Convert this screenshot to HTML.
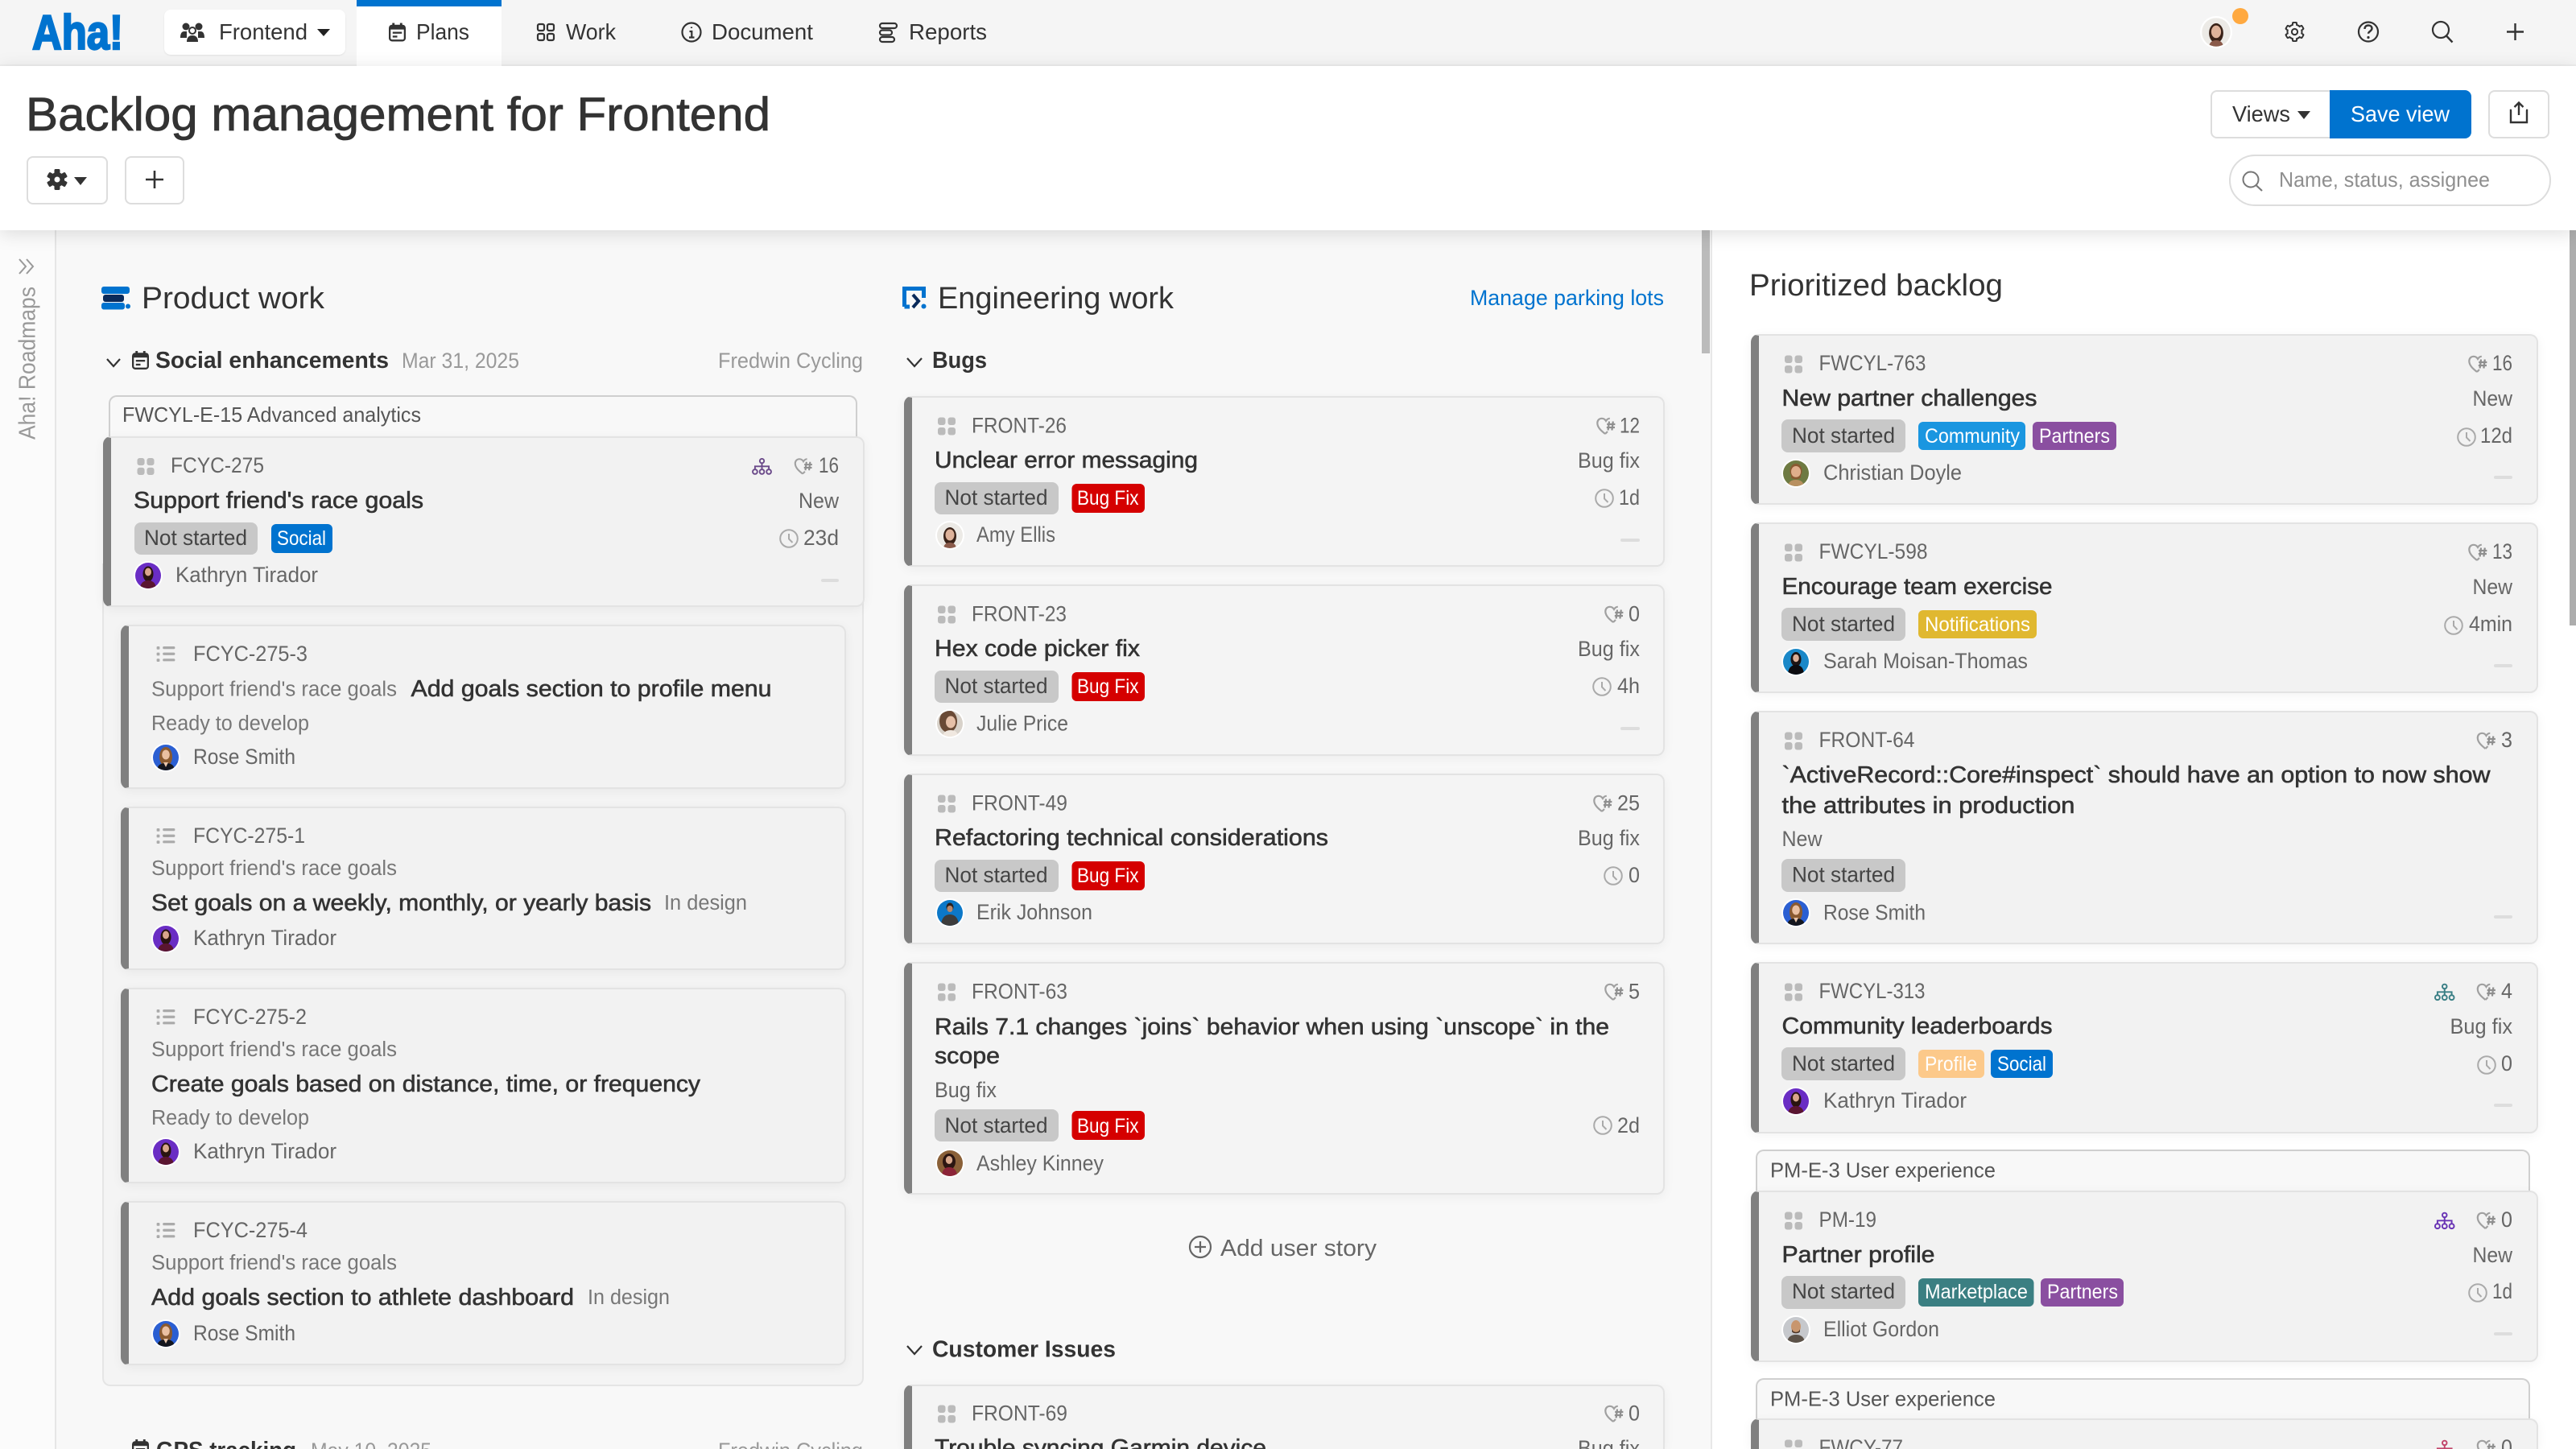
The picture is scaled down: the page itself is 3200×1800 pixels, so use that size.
<!DOCTYPE html>
<html lang="en">
<head>
<meta charset="utf-8">
<title>Backlog management for Frontend</title>
<style>
html,body{margin:0;padding:0;width:3200px;height:1800px;overflow:hidden;background:#f8f8f8;font-family:"Liberation Sans",sans-serif}
#w{position:relative;width:3200px;height:1800px;overflow:hidden;background:#f8f8f8}
.a{position:absolute;box-sizing:border-box}
.c{position:absolute;box-sizing:border-box;background:#f2f2f2;border:2px solid #e3e3e3;border-left:10px solid #808080;border-radius:10px;box-shadow:0 3px 14px rgba(0,0,0,.05)}
.o{border-bottom:0;border-radius:10px 10px 0 0}
.m{background:#f4f4f4}
.e{position:absolute;box-sizing:border-box;background:#f8f8f8;border:2px solid #cfcfcf;border-bottom:0;border-radius:10px 10px 0 0}
svg{position:absolute;left:0;top:0}
text{font-family:"Liberation Sans",sans-serif}
.n{font-size:27.5px;fill:#333}
.i{font-size:27px;fill:#666}
.h{font-size:29px;fill:#333;stroke:#333;stroke-width:.6px}
.g{font-size:25.5px;fill:#777}
.p{font-size:27px;fill:#444}
.s{font-size:25px;fill:#fff}
.b{font-size:38px;fill:#333}
.u{font-size:29px;font-weight:bold;fill:#333}
.l{font-size:27px;fill:#999}
</style>
</head>
<body>
<div id="w">
<div class="a" style="left:0;top:0;width:3200px;height:82px;background:#f5f5f5;border-bottom:2px solid #eee"></div>
<div class="a" style="left:443px;top:0;width:180px;height:84px;background:#fff;border-top:8px solid #0073cf"></div>
<div class="a" style="left:204px;top:12px;width:225px;height:56px;background:#fff;border-radius:8px;box-shadow:0 1px 2px rgba(0,0,0,.08)"></div>
<div class="a" style="left:0;top:82px;width:3200px;height:204px;background:#fff;box-shadow:0 4px 22px rgba(0,0,0,.13);z-index:3"></div>
<div class="a" style="left:0;top:286px;width:70px;height:1514px;background:#fbfbfb;border-right:2px solid #e6e6e6"></div>
<div class="a" style="left:2125px;top:286px;width:1075px;height:1514px;background:#fff;border-left:2px solid #e8e8e8"></div>
<div class="a" style="left:2114px;top:286px;width:10px;height:153px;background:#bbb"></div>
<div class="a" style="left:3192px;top:286px;width:8px;height:491px;background:#adadad"></div>

<div class="a" style="left:2746px;top:112px;width:150px;height:60px;background:#fff;border:2px solid #ddd;border-radius:8px 0 0 8px;z-index:4"></div>
<div class="a" style="left:2894px;top:112px;width:176px;height:60px;background:#0073cf;border-radius:0 8px 8px 0;z-index:4"></div>
<div class="a" style="left:3091px;top:112px;width:76px;height:60px;background:#fff;border:2px solid #ddd;border-radius:8px;z-index:4"></div>
<div class="a" style="left:2769px;top:192px;width:400px;height:64px;background:#fff;border:2px solid #ddd;border-radius:32px;z-index:4"></div>
<div class="a" style="left:33px;top:194px;width:101px;height:60px;background:#fff;border:2px solid #ddd;border-radius:8px;z-index:4"></div>
<div class="a" style="left:155px;top:194px;width:74px;height:60px;background:#fff;border:2px solid #ddd;border-radius:8px;z-index:4"></div>

<div class="e" style="left:135px;top:491px;width:930px;height:56px"></div>
<div class="a" style="left:127px;top:700px;width:946px;height:1022px;background:#f4f4f4;border:2px solid #e5e5e5;border-top:0;border-radius:0 0 10px 10px"></div>
<div class="c" style="left:128px;top:542px;width:946px;height:212px"></div>
<div class="c" style="left:150px;top:776px;width:901px;height:204px"></div>
<div class="c" style="left:150px;top:1002px;width:901px;height:203px"></div>
<div class="c" style="left:150px;top:1227px;width:901px;height:243px"></div>
<div class="c" style="left:150px;top:1492px;width:901px;height:204px"></div>

<div class="c m" style="left:1123px;top:492px;width:945px;height:212px"></div>
<div class="c m" style="left:1123px;top:726px;width:945px;height:213px"></div>
<div class="c m" style="left:1123px;top:961px;width:945px;height:212px"></div>
<div class="c m" style="left:1123px;top:1195px;width:945px;height:289px"></div>
<div class="c m o" style="left:1123px;top:1720px;width:945px;height:80px"></div>

<div class="c" style="left:2175px;top:415px;width:978px;height:212px"></div>
<div class="c" style="left:2175px;top:649px;width:978px;height:212px"></div>
<div class="c" style="left:2175px;top:883px;width:978px;height:290px"></div>
<div class="c" style="left:2175px;top:1195px;width:978px;height:213px"></div>
<div class="e" style="left:2181px;top:1428px;width:962px;height:56px"></div>
<div class="c" style="left:2175px;top:1479px;width:978px;height:213px"></div>
<div class="e" style="left:2181px;top:1712px;width:962px;height:56px"></div>
<div class="c o" style="left:2175px;top:1762px;width:978px;height:38px"></div>

<svg width="3200" height="1800" viewBox="0 0 3200 1800" style="z-index:5;overflow:hidden">
<defs>
<clipPath id="cc"><circle cx="16" cy="16" r="16"/></clipPath>
<symbol id="drag" viewBox="0 0 22 22"><g fill="#bbb"><rect width="9.5" height="9.5" rx="3"/><rect x="12.5" width="9.5" height="9.5" rx="3"/><rect y="12.5" width="9.5" height="9.5" rx="3"/><rect x="12.5" y="12.5" width="9.5" height="9.5" rx="3"/></g></symbol>
<symbol id="heart" viewBox="0 0 24 22"><path d="M11 20.5C6 16.5 1.3 12.5 1.3 7C1.3 3.5 3.8 1.3 6.8 1.3C8.8 1.3 10.8 2.4 12 4.4C13 2.8 14.6 1.3 16.8 1.3M11 20.5L14 17.5" fill="none" stroke="#a0a0a0" stroke-width="2.2"/><path d="M16 5L14.6 16M20.8 5L19.4 16M13.2 8.5H23.4M12.8 12.5H23" fill="none" stroke="#8f8f8f" stroke-width="2.2"/></symbol>
<symbol id="clock" viewBox="0 0 24 24"><circle cx="12" cy="12" r="10.8" fill="none" stroke="#aaa" stroke-width="2"/><path d="M12 6V12.5L16.5 17" fill="none" stroke="#aaa" stroke-width="2"/></symbol>
<symbol id="hier" viewBox="0 0 28 22"><g fill="none" stroke="currentColor" stroke-width="2"><circle cx="14" cy="3.8" r="2.8"/><path d="M14 6.6V14M5 14V10.8H23V14"/><circle cx="5" cy="17.8" r="3"/><circle cx="14" cy="17.8" r="3"/><circle cx="23" cy="17.8" r="3"/></g></symbol>
<symbol id="list" viewBox="0 0 24 20"><g fill="#aaa"><rect y="0" width="4" height="4" rx="1"/><rect y="8" width="4" height="4" rx="1"/><rect y="16" width="4" height="4" rx="1"/><rect x="8" y="0" width="16" height="3.4" rx="1.5"/><rect x="8" y="8" width="16" height="3.4" rx="1.5"/><rect x="8" y="16" width="16" height="3.4" rx="1.5"/></g></symbol>
<symbol id="cal" viewBox="0 0 22 24"><rect x="1.2" y="3.5" width="19.6" height="19.3" rx="3" fill="none" stroke="#333" stroke-width="2.4"/><rect x="1" y="3.5" width="20" height="5" fill="#333"/><rect x="4.5" y="0" width="3" height="5" fill="#333"/><rect x="14.5" y="0" width="3" height="5" fill="#333"/><rect x="5" y="11.5" width="12" height="2.4" fill="#333"/><rect x="5" y="16.5" width="6" height="2.4" fill="#333"/></symbol>
<symbol id="k" viewBox="-2 -2 36 36"><circle cx="16" cy="16" r="18" fill="#fff"/><g clip-path="url(#cc)"><rect width="32" height="32" fill="#6a2dc4"/><ellipse cx="16" cy="14" rx="6.5" ry="9.5" fill="#2a1410"/><ellipse cx="16" cy="11.5" rx="4" ry="5" fill="#d9a68c"/><path d="M6 33c0-8 5-11 10-11s10 3 10 11z" fill="#5a1530"/></g></symbol>
<symbol id="r" viewBox="-2 -2 36 36"><circle cx="16" cy="16" r="18" fill="#fff"/><g clip-path="url(#cc)"><rect width="32" height="32" fill="#2b5fd2"/><ellipse cx="16" cy="15" rx="8" ry="12" fill="#8a5a30"/><ellipse cx="16" cy="12.5" rx="4.8" ry="6" fill="#eac0a2"/><path d="M5 33c0-8 5-10 11-10s11 2 11 10z" fill="#14161e"/><path d="M13 22h6l-3 6z" fill="#e8c4a8"/></g></symbol>
<symbol id="am" viewBox="-2 -2 36 36"><circle cx="16" cy="16" r="18" fill="#fff"/><g clip-path="url(#cc)"><rect width="32" height="32" fill="#eceae6"/><ellipse cx="16" cy="17" rx="8" ry="11" fill="#3a2218"/><ellipse cx="16" cy="15.5" rx="5.5" ry="7" fill="#deb29a"/><path d="M8 33c0-6 4-8 8-8s8 2 8 8z" fill="#8a5a4a"/></g></symbol>
<symbol id="ju" viewBox="-2 -2 36 36"><circle cx="16" cy="16" r="18" fill="#fff"/><g clip-path="url(#cc)"><rect width="32" height="32" fill="#d8d2ca"/><ellipse cx="14" cy="13" rx="11" ry="14" fill="#6a4a36"/><ellipse cx="17" cy="14" rx="6" ry="7.5" fill="#e6c0a8"/><path d="M7 33c0-6 4-9 10-9s9 3 9 9z" fill="#f0e8e0"/></g></symbol>
<symbol id="er" viewBox="-2 -2 36 36"><circle cx="16" cy="16" r="18" fill="#fff"/><g clip-path="url(#cc)"><rect width="32" height="32" fill="#0c78c8"/><ellipse cx="16" cy="9" rx="4.5" ry="5.5" fill="#2a2220"/><ellipse cx="16" cy="11" rx="3.6" ry="4" fill="#b8886c"/><path d="M5 33c0-11 5-15 11-15s11 4 11 15z" fill="#3c3c3c"/></g></symbol>
<symbol id="as" viewBox="-2 -2 36 36"><circle cx="16" cy="16" r="18" fill="#fff"/><g clip-path="url(#cc)"><rect width="32" height="32" fill="#8a6038"/><ellipse cx="15" cy="14" rx="8" ry="10" fill="#2c1612"/><ellipse cx="15" cy="12" rx="4.2" ry="5" fill="#d8a88c"/><path d="M6 33c0-9 4-12 9-12s10 3 10 12z" fill="#8c2438"/></g></symbol>
<symbol id="ch" viewBox="-2 -2 36 36"><circle cx="16" cy="16" r="18" fill="#fff"/><g clip-path="url(#cc)"><rect width="32" height="32" fill="#6e7a42"/><ellipse cx="16" cy="13" rx="7.5" ry="9" fill="#8a5a32"/><ellipse cx="16" cy="14" rx="6" ry="7" fill="#e0ae8c"/><path d="M10 17c2 5 10 5 12 0v4c-2 3-10 3-12 0z" fill="#8a5a32"/><path d="M6 33c0-6 4-9 10-9s10 3 10 9z" fill="#b89060"/></g></symbol>
<symbol id="sa" viewBox="-2 -2 36 36"><circle cx="16" cy="16" r="18" fill="#fff"/><g clip-path="url(#cc)"><rect width="32" height="32" fill="#1a88c8"/><ellipse cx="16" cy="13" rx="6.5" ry="9" fill="#1c1414"/><ellipse cx="16" cy="11.5" rx="3.8" ry="4.8" fill="#dcae96"/><path d="M6 33c0-9 4-13 10-13s10 4 10 13z" fill="#0c0c10"/></g></symbol>
<symbol id="el" viewBox="-2 -2 36 36"><circle cx="16" cy="16" r="18" fill="#fff"/><g clip-path="url(#cc)"><rect width="32" height="32" fill="#c6c8cc"/><ellipse cx="16" cy="12" rx="6" ry="8" fill="#c8966e"/><path d="M11 15c1 5 9 5 10 0v3c-1 3-9 3-10 0z" fill="#4a3426"/><path d="M5 33c0-8 5-11 11-11s11 3 11 11z" fill="#5c5248"/></g></symbol>
</defs>

<!-- nav -->
<text x="40" y="61" textLength="113" lengthAdjust="spacingAndGlyphs" style="font-size:60px;font-weight:bold;fill:#0073cf;stroke:#0073cf;stroke-width:2.4px">Aha!</text>
<g fill="#333"><circle cx="231" cy="33" r="4.5"/><circle cx="247" cy="33" r="4.5"/><path d="M224 47c0-6 2-8 5-8h3v8zM254 47c0-6-2-8-5-8h-3v8z"/><circle cx="239" cy="38" r="4" fill="none" stroke="#333" stroke-width="2"/><path d="M232 52c0-6 3-8 7-8s7 2 7 8z"/></g>
<text class="n" x="272" y="49" textLength="110" lengthAdjust="spacingAndGlyphs">Frontend</text>
<path d="M394 36h16l-8 9z" fill="#222"/>
<use href="#cal" x="483" y="28" width="21" height="24"/>
<text class="n" x="517" y="49" textLength="66" lengthAdjust="spacingAndGlyphs">Plans</text>
<g fill="none" stroke="#333" stroke-width="2.2"><rect x="668" y="30" width="8" height="8" rx="2"/><rect x="680" y="30" width="8" height="8" rx="2"/><rect x="668" y="42" width="8" height="8" rx="2"/><rect x="680" y="42" width="8" height="8" rx="2"/></g>
<text class="n" x="703" y="49" textLength="62" lengthAdjust="spacingAndGlyphs">Work</text>
<circle cx="859" cy="40" r="11.5" fill="none" stroke="#333" stroke-width="2.2"/><path d="M859 33.5v1.5M856.5 39h2.8v7M856 46.5h6.5" fill="none" stroke="#333" stroke-width="2.2"/>
<text class="n" x="884" y="49" textLength="126" lengthAdjust="spacingAndGlyphs">Document</text>
<g fill="none" stroke="#333" stroke-width="2.2"><rect x="1093" y="29" width="21" height="6" rx="3"/><rect x="1093" y="37.5" width="15" height="6" rx="3"/><rect x="1093" y="46" width="18" height="6" rx="3"/></g>
<text class="n" x="1129" y="49" textLength="97" lengthAdjust="spacingAndGlyphs">Reports</text>

<!-- top right -->
<use href="#am" x="2733" y="20" width="40" height="40"/>
<circle cx="2783" cy="20" r="10" fill="#ffa940"/>
<g transform="translate(2850.5 39.5)"><g fill="#333"><circle r="10"/><rect x="-3.5" y="-12.5" width="7" height="25" rx="2"/><rect x="-3.5" y="-12.5" width="7" height="25" rx="2" transform="rotate(60)"/><rect x="-3.5" y="-12.5" width="7" height="25" rx="2" transform="rotate(120)"/></g><g fill="#f5f5f5"><circle r="8"/><rect x="-1.6" y="-10.6" width="3.2" height="21.2" rx="1"/><rect x="-1.6" y="-10.6" width="3.2" height="21.2" rx="1" transform="rotate(60)"/><rect x="-1.6" y="-10.6" width="3.2" height="21.2" rx="1" transform="rotate(120)"/></g><circle r="3.6" fill="none" stroke="#333" stroke-width="2"/></g>
<circle cx="2942" cy="39.5" r="12" fill="none" stroke="#333" stroke-width="2.2"/>
<path d="M2937.5 36c0-3 2-4.5 4.6-4.5s4.4 1.6 4.4 3.8c0 3.6-4.4 3.4-4.4 6.4" fill="none" stroke="#333" stroke-width="2.4"/><circle cx="2942" cy="46.5" r="1.6" fill="#333"/>
<circle cx="3032" cy="37" r="10" fill="none" stroke="#333" stroke-width="2.2"/><path d="M3039 44.5l7.5 8" fill="none" stroke="#333" stroke-width="2.4"/>
<path d="M3124.5 29v21M3114 39.5h21" fill="none" stroke="#333" stroke-width="2.4"/>

<!-- title -->
<text x="32" y="162" textLength="925" lengthAdjust="spacingAndGlyphs" style="font-size:58px;fill:#333;stroke:#333;stroke-width:.8px">Backlog management for Frontend</text>
<g transform="translate(71 223)"><g fill="#333"><circle r="9"/><rect x="-3.5" y="-13" width="7" height="26" rx="1.5"/><rect x="-3.5" y="-13" width="7" height="26" rx="1.5" transform="rotate(60)"/><rect x="-3.5" y="-13" width="7" height="26" rx="1.5" transform="rotate(120)"/></g><circle r="3.5" fill="#fff"/></g>
<path d="M92 220h16l-8 10z" fill="#333"/>
<path d="M192 212v22M181 223h22" fill="none" stroke="#333" stroke-width="2.6"/>
<text class="n" x="2773" y="151" textLength="72" lengthAdjust="spacingAndGlyphs">Views</text>
<path d="M2854 138h16l-8 10z" fill="#333"/>
<text x="2920" y="151" textLength="123" lengthAdjust="spacingAndGlyphs" style="font-size:27.5px;fill:#fff">Save view</text>
<path d="M3120 137h-1v15h20v-15h-1M3129 143v-15M3123.5 133l5.5-5.5 5.5 5.5" fill="none" stroke="#333" stroke-width="2.4"/>
<circle cx="2796" cy="223" r="9.5" fill="none" stroke="#777" stroke-width="2"/><path d="M2803 230.5l7 6.5" fill="none" stroke="#777" stroke-width="2.2"/>
<text x="2831" y="232" textLength="262" lengthAdjust="spacingAndGlyphs" style="font-size:26px;fill:#8f8f8f">Name, status, assignee</text>

<!-- sidebar -->
<path d="M24 322l8 9-8 9M33 322l8 9-8 9" fill="none" stroke="#999" stroke-width="2"/>
<text transform="translate(43.5 546) rotate(-90)" x="0" y="0" textLength="190" lengthAdjust="spacingAndGlyphs" style="font-size:29px;fill:#999">Aha! Roadmaps</text>

<!-- Product work -->
<rect x="126" y="356" width="35" height="9" rx="3" fill="#0073cf"/><rect x="128" y="366" width="26" height="9" rx="3" fill="#0a2a5a"/><rect x="126" y="376" width="29" height="8.5" rx="3" fill="#0073cf"/><circle cx="159" cy="380.5" r="3" fill="#0073cf"/>
<text class="b" x="176" y="383" textLength="227" lengthAdjust="spacingAndGlyphs">Product work</text>
<path d="M133 446l8 9 8-9" fill="none" stroke="#333" stroke-width="2.2"/>
<use href="#cal" x="164" y="436" width="21" height="23"/>
<text class="u" x="193" y="457" textLength="290" lengthAdjust="spacingAndGlyphs">Social enhancements</text>
<text class="l" x="499" y="457" textLength="146" lengthAdjust="spacingAndGlyphs">Mar 31, 2025</text>
<text class="l" x="892" y="457" textLength="180" lengthAdjust="spacingAndGlyphs">Fredwin Cycling</text>
<text x="152" y="524" textLength="371" lengthAdjust="spacingAndGlyphs" style="font-size:26px;fill:#555">FWCYL-E-15 Advanced analytics</text>

<!-- FCYC-275 -->
<g transform="translate(166 542)">
<use href="#drag" x="4" y="27" width="22" height="21"/>
<text class="i" x="46" y="45" textLength="116" lengthAdjust="spacingAndGlyphs">FCYC-275</text>
<use href="#hier" x="767" y="27" width="27" height="21" style="color:#6b4a8a"/>
<use href="#heart" x="820" y="27" width="24" height="21"/>
<text class="i" x="851" y="45" textLength="25" lengthAdjust="spacingAndGlyphs">16</text>
<text class="h" x="0" y="89" textLength="360" lengthAdjust="spacingAndGlyphs">Support friend's race goals</text>
<text class="i" x="826" y="89" textLength="50" lengthAdjust="spacingAndGlyphs">New</text>
<rect x="1" y="107" width="153" height="40" rx="8" fill="#c8c8c8"/>
<text class="p" x="13" y="135" textLength="128" lengthAdjust="spacingAndGlyphs">Not started</text>
<rect x="171" y="109" width="76" height="36" rx="6" fill="#0073cf"/>
<text class="s" x="178" y="135" textLength="61" lengthAdjust="spacingAndGlyphs">Social</text>
<use href="#clock" x="802" y="115" width="24" height="24"/>
<text class="i" x="832" y="135" textLength="44" lengthAdjust="spacingAndGlyphs">23d</text>
<use href="#k" x="0" y="155" width="36" height="36"/>
<text class="i" x="52" y="181" textLength="177" lengthAdjust="spacingAndGlyphs">Kathryn Tirador</text>
<rect x="854" y="177" width="22" height="4" rx="2" fill="#ddd"/>
</g>

<!-- children -->
<use href="#list" x="194" y="803" width="24" height="19"/>
<text class="i" x="240" y="821" textLength="142" lengthAdjust="spacingAndGlyphs">FCYC-275-3</text>
<text class="g" x="188" y="864.5" textLength="305" lengthAdjust="spacingAndGlyphs">Support friend's race goals</text>
<text class="h" x="510.5" y="865" textLength="448" lengthAdjust="spacingAndGlyphs">Add goals section to profile menu</text>
<text class="g" x="188" y="907" textLength="196" lengthAdjust="spacingAndGlyphs">Ready to develop</text>
<use href="#r" x="188" y="923" width="36" height="36"/>
<text class="i" x="240" y="949" textLength="127" lengthAdjust="spacingAndGlyphs">Rose Smith</text>

<use href="#list" x="194" y="1029" width="24" height="19"/>
<text class="i" x="240" y="1047" textLength="139" lengthAdjust="spacingAndGlyphs">FCYC-275-1</text>
<text class="g" x="188" y="1087" textLength="305" lengthAdjust="spacingAndGlyphs">Support friend's race goals</text>
<text class="h" x="188" y="1131" textLength="621" lengthAdjust="spacingAndGlyphs">Set goals on a weekly, monthly, or yearly basis</text>
<text class="g" x="825" y="1130" textLength="103" lengthAdjust="spacingAndGlyphs">In design</text>
<use href="#k" x="188" y="1148" width="36" height="36"/>
<text class="i" x="240" y="1174" textLength="178" lengthAdjust="spacingAndGlyphs">Kathryn Tirador</text>

<use href="#list" x="194" y="1254" width="24" height="19"/>
<text class="i" x="240" y="1272" textLength="141" lengthAdjust="spacingAndGlyphs">FCYC-275-2</text>
<text class="g" x="188" y="1312" textLength="305" lengthAdjust="spacingAndGlyphs">Support friend's race goals</text>
<text class="h" x="188" y="1356" textLength="682" lengthAdjust="spacingAndGlyphs">Create goals based on distance, time, or frequency</text>
<text class="g" x="188" y="1397" textLength="196" lengthAdjust="spacingAndGlyphs">Ready to develop</text>
<use href="#k" x="188" y="1413" width="36" height="36"/>
<text class="i" x="240" y="1439" textLength="178" lengthAdjust="spacingAndGlyphs">Kathryn Tirador</text>

<use href="#list" x="194" y="1519" width="24" height="19"/>
<text class="i" x="240" y="1537" textLength="142" lengthAdjust="spacingAndGlyphs">FCYC-275-4</text>
<text class="g" x="188" y="1577" textLength="305" lengthAdjust="spacingAndGlyphs">Support friend's race goals</text>
<text class="h" x="188" y="1621" textLength="525" lengthAdjust="spacingAndGlyphs">Add goals section to athlete dashboard</text>
<text class="g" x="730" y="1620" textLength="102" lengthAdjust="spacingAndGlyphs">In design</text>
<use href="#r" x="188" y="1639" width="36" height="36"/>
<text class="i" x="240" y="1665" textLength="127" lengthAdjust="spacingAndGlyphs">Rose Smith</text>

<!-- GPS -->
<use href="#cal" x="164" y="1788" width="21" height="23"/>
<text class="u" x="194" y="1811" textLength="174" lengthAdjust="spacingAndGlyphs">GPS tracking</text>
<text class="l" x="386" y="1811" textLength="150" lengthAdjust="spacingAndGlyphs">May 10, 2025</text>
<text class="l" x="892" y="1811" textLength="180" lengthAdjust="spacingAndGlyphs">Fredwin Cycling</text>

<!-- Engineering -->
<path d="M1123.5 381V358.5H1147.5V370M1123.5 381H1130" fill="none" stroke="#0073cf" stroke-width="5"/>
<path d="M1134 366l7 8-7 8" fill="none" stroke="#0a2a5a" stroke-width="4"/><circle cx="1147.5" cy="380.5" r="3" fill="#0073cf"/>
<text class="b" x="1165" y="383" textLength="293" lengthAdjust="spacingAndGlyphs">Engineering work</text>
<text x="1826" y="379" textLength="241" lengthAdjust="spacingAndGlyphs" style="font-size:27px;fill:#0073cf">Manage parking lots</text>
<path d="M1127 445l9 10 9-10" fill="none" stroke="#333" stroke-width="2.2"/>
<text class="u" x="1158" y="457" textLength="68" lengthAdjust="spacingAndGlyphs">Bugs</text>

<g transform="translate(1161 492)">
<use href="#drag" x="4" y="26.5" width="22" height="22"/>
<text class="i" x="46" y="45.5" textLength="118" lengthAdjust="spacingAndGlyphs">FRONT-26</text>
<use href="#heart" x="822" y="26.5" width="24" height="22"/>
<text class="i" x="851" y="45.5" textLength="25" lengthAdjust="spacingAndGlyphs">12</text>
<text class="h" x="0" y="89" textLength="327" lengthAdjust="spacingAndGlyphs">Unclear error messaging</text>
<text class="i" x="799" y="89" textLength="77" lengthAdjust="spacingAndGlyphs">Bug fix</text>
<rect x="0" y="107" width="154" height="40" rx="8" fill="#c8c8c8"/>
<text class="p" x="12.5" y="135" textLength="128" lengthAdjust="spacingAndGlyphs">Not started</text>
<rect x="170.5" y="109" width="90.5" height="36" rx="6" fill="#d50000"/>
<text class="s" x="177" y="135" textLength="76.5" lengthAdjust="spacingAndGlyphs">Bug Fix</text>
<use href="#clock" x="820" y="115" width="24" height="24"/>
<text class="i" x="850" y="135" textLength="26" lengthAdjust="spacingAndGlyphs">1d</text>
<use href="#am" x="1" y="155" width="36" height="36"/>
<text class="i" x="52" y="181" textLength="98" lengthAdjust="spacingAndGlyphs">Amy Ellis</text>
<rect x="852" y="177" width="24" height="4" rx="2" fill="#ddd"/>
</g>
<g transform="translate(1161 726)">
<use href="#drag" x="4" y="26.5" width="22" height="22"/>
<text class="i" x="46" y="45.5" textLength="118" lengthAdjust="spacingAndGlyphs">FRONT-23</text>
<use href="#heart" x="832" y="26.5" width="24" height="22"/>
<text class="i" x="862" y="45.5" textLength="14" lengthAdjust="spacingAndGlyphs">0</text>
<text class="h" x="0" y="89" textLength="255" lengthAdjust="spacingAndGlyphs">Hex code picker fix</text>
<text class="i" x="799" y="89" textLength="77" lengthAdjust="spacingAndGlyphs">Bug fix</text>
<rect x="0" y="107" width="154" height="40" rx="8" fill="#c8c8c8"/>
<text class="p" x="12.5" y="135" textLength="128" lengthAdjust="spacingAndGlyphs">Not started</text>
<rect x="170.5" y="109" width="90.5" height="36" rx="6" fill="#d50000"/>
<text class="s" x="177" y="135" textLength="76.5" lengthAdjust="spacingAndGlyphs">Bug Fix</text>
<use href="#clock" x="817" y="115" width="24" height="24"/>
<text class="i" x="848" y="135" textLength="28" lengthAdjust="spacingAndGlyphs">4h</text>
<use href="#ju" x="1" y="155" width="36" height="36"/>
<text class="i" x="52" y="181.5" textLength="114" lengthAdjust="spacingAndGlyphs">Julie Price</text>
<rect x="852" y="177" width="24" height="4" rx="2" fill="#ddd"/>
</g>
<g transform="translate(1161 961)">
<use href="#drag" x="4" y="26.5" width="22" height="22"/>
<text class="i" x="46" y="45.5" textLength="119" lengthAdjust="spacingAndGlyphs">FRONT-49</text>
<use href="#heart" x="818" y="26.5" width="24" height="22"/>
<text class="i" x="848" y="45.5" textLength="28" lengthAdjust="spacingAndGlyphs">25</text>
<text class="h" x="0" y="89" textLength="489" lengthAdjust="spacingAndGlyphs">Refactoring technical considerations</text>
<text class="i" x="799" y="89" textLength="77" lengthAdjust="spacingAndGlyphs">Bug fix</text>
<rect x="0" y="107" width="154" height="40" rx="8" fill="#c8c8c8"/>
<text class="p" x="12.5" y="135" textLength="128" lengthAdjust="spacingAndGlyphs">Not started</text>
<rect x="170.5" y="109" width="90.5" height="36" rx="6" fill="#d50000"/>
<text class="s" x="177" y="135" textLength="76.5" lengthAdjust="spacingAndGlyphs">Bug Fix</text>
<use href="#clock" x="831" y="115" width="24" height="24"/>
<text class="i" x="862" y="135" textLength="14" lengthAdjust="spacingAndGlyphs">0</text>
<use href="#er" x="1" y="155" width="36" height="36"/>
<text class="i" x="52" y="181" textLength="144" lengthAdjust="spacingAndGlyphs">Erik Johnson</text>
</g>
<g transform="translate(1161 1195)">
<use href="#drag" x="4" y="26.5" width="22" height="22"/>
<text class="i" x="46" y="45.5" textLength="119" lengthAdjust="spacingAndGlyphs">FRONT-63</text>
<use href="#heart" x="832" y="26.5" width="24" height="22"/>
<text class="i" x="862" y="45.5" textLength="14" lengthAdjust="spacingAndGlyphs">5</text>
<text class="h" x="0" y="90" textLength="838" lengthAdjust="spacingAndGlyphs">Rails 7.1 changes `joins` behavior when using `unscope` in the</text>
<text class="h" x="0" y="126" textLength="81" lengthAdjust="spacingAndGlyphs">scope</text>
<text class="i" x="0" y="168" textLength="77" lengthAdjust="spacingAndGlyphs">Bug fix</text>
<rect x="0" y="183" width="154" height="40" rx="8" fill="#c8c8c8"/>
<text class="p" x="12.5" y="212" textLength="128" lengthAdjust="spacingAndGlyphs">Not started</text>
<rect x="170.5" y="185" width="90.5" height="36" rx="6" fill="#d50000"/>
<text class="s" x="177" y="212" textLength="76.5" lengthAdjust="spacingAndGlyphs">Bug Fix</text>
<use href="#clock" x="818" y="191" width="24" height="24"/>
<text class="i" x="848" y="212" textLength="28" lengthAdjust="spacingAndGlyphs">2d</text>
<use href="#as" x="1" y="232" width="36" height="36"/>
<text class="i" x="52" y="259" textLength="158" lengthAdjust="spacingAndGlyphs">Ashley Kinney</text>
</g>
<circle cx="1491" cy="1549" r="13" fill="none" stroke="#666" stroke-width="2.2"/><path d="M1491 1542v14M1484 1549h14" fill="none" stroke="#666" stroke-width="2.2"/>
<text x="1516" y="1560" textLength="194" lengthAdjust="spacingAndGlyphs" style="font-size:29px;fill:#666">Add user story</text>
<path d="M1127 1672l9 10 9-10" fill="none" stroke="#333" stroke-width="2.2"/>
<text class="u" x="1158" y="1685.5" textLength="228" lengthAdjust="spacingAndGlyphs">Customer Issues</text>
<g transform="translate(1161 1719)">
<use href="#drag" x="4" y="26.5" width="22" height="22"/>
<text class="i" x="46" y="45.5" textLength="119" lengthAdjust="spacingAndGlyphs">FRONT-69</text>
<use href="#heart" x="832" y="26.5" width="24" height="22"/>
<text class="i" x="862" y="45.5" textLength="14" lengthAdjust="spacingAndGlyphs">0</text>
<text class="h" x="0" y="89" textLength="412" lengthAdjust="spacingAndGlyphs">Trouble syncing Garmin device</text>
<text class="i" x="799" y="89" textLength="77" lengthAdjust="spacingAndGlyphs">Bug fix</text>
</g>

<!-- Prioritized -->
<text class="b" x="2173" y="367" textLength="315" lengthAdjust="spacingAndGlyphs">Prioritized backlog</text>
<g transform="translate(2213.5 415)">
<use href="#drag" x="3.5" y="26.5" width="22" height="22"/>
<text class="i" x="46" y="45" textLength="133" lengthAdjust="spacingAndGlyphs">FWCYL-763</text>
<use href="#heart" x="852.5" y="26.5" width="24" height="22"/>
<text class="i" x="882.5" y="45" textLength="25" lengthAdjust="spacingAndGlyphs">16</text>
<text class="h" x="0" y="89" textLength="317" lengthAdjust="spacingAndGlyphs">New partner challenges</text>
<text class="i" x="858" y="89" textLength="49.5" lengthAdjust="spacingAndGlyphs">New</text>
<rect x="-.5" y="106" width="154" height="41" rx="8" fill="#c8c8c8"/>
<text class="p" x="12.5" y="135" textLength="128" lengthAdjust="spacingAndGlyphs">Not started</text>
<rect x="169.5" y="109" width="133" height="35" rx="6" fill="#1a96e0"/>
<text class="s" x="177.5" y="135" textLength="118" lengthAdjust="spacingAndGlyphs">Community</text>
<rect x="311.5" y="109" width="104" height="35" rx="6" fill="#8a4fa0"/>
<text class="s" x="319.5" y="135" textLength="88" lengthAdjust="spacingAndGlyphs">Partners</text>
<use href="#clock" x="838.5" y="116" width="24" height="24"/>
<text class="i" x="867.5" y="135" textLength="40" lengthAdjust="spacingAndGlyphs">12d</text>
<use href="#ch" x="-.5" y="155" width="36" height="36"/>
<text class="i" x="51.5" y="181" textLength="172" lengthAdjust="spacingAndGlyphs">Christian Doyle</text>
<rect x="884.5" y="176" width="23" height="4" rx="2" fill="#ddd"/>
</g>
<g transform="translate(2213.5 649)">
<use href="#drag" x="3.5" y="26.5" width="22" height="22"/>
<text class="i" x="46" y="45" textLength="135" lengthAdjust="spacingAndGlyphs">FWCYL-598</text>
<use href="#heart" x="852.5" y="26.5" width="24" height="22"/>
<text class="i" x="882.5" y="45" textLength="25" lengthAdjust="spacingAndGlyphs">13</text>
<text class="h" x="0" y="89" textLength="336" lengthAdjust="spacingAndGlyphs">Encourage team exercise</text>
<text class="i" x="858" y="89" textLength="49.5" lengthAdjust="spacingAndGlyphs">New</text>
<rect x="-.5" y="106" width="154" height="41" rx="8" fill="#c8c8c8"/>
<text class="p" x="12.5" y="135" textLength="128" lengthAdjust="spacingAndGlyphs">Not started</text>
<rect x="169.5" y="109" width="147" height="35" rx="6" fill="#e0b830"/>
<text class="s" x="177.5" y="135" textLength="131" lengthAdjust="spacingAndGlyphs">Notifications</text>
<use href="#clock" x="822.5" y="116" width="24" height="24"/>
<text class="i" x="853.5" y="135" textLength="54" lengthAdjust="spacingAndGlyphs">4min</text>
<use href="#sa" x="-.5" y="155" width="36" height="36"/>
<text class="i" x="51.5" y="181" textLength="254" lengthAdjust="spacingAndGlyphs">Sarah Moisan-Thomas</text>
<rect x="884.5" y="176" width="23" height="4" rx="2" fill="#ddd"/>
</g>
<g transform="translate(2213.5 883)">
<use href="#drag" x="3.5" y="26.5" width="22" height="22"/>
<text class="i" x="46" y="45" textLength="119" lengthAdjust="spacingAndGlyphs">FRONT-64</text>
<use href="#heart" x="863" y="26.5" width="24" height="22"/>
<text class="i" x="893.5" y="45" textLength="14" lengthAdjust="spacingAndGlyphs">3</text>
<text class="h" x="0" y="89" textLength="880" lengthAdjust="spacingAndGlyphs">`ActiveRecord::Core#inspect` should have an option to now show</text>
<text class="h" x="0" y="127" textLength="364" lengthAdjust="spacingAndGlyphs">the attributes in production</text>
<text class="i" x="0" y="168" textLength="50" lengthAdjust="spacingAndGlyphs">New</text>
<rect x="-.5" y="184" width="154" height="41" rx="8" fill="#c8c8c8"/>
<text class="p" x="12.5" y="212.5" textLength="128" lengthAdjust="spacingAndGlyphs">Not started</text>
<use href="#r" x="-.5" y="233" width="36" height="36"/>
<text class="i" x="51.5" y="259.5" textLength="127" lengthAdjust="spacingAndGlyphs">Rose Smith</text>
<rect x="884.5" y="254" width="23" height="4" rx="2" fill="#ddd"/>
</g>
<g transform="translate(2213.5 1195)">
<use href="#drag" x="3.5" y="26.5" width="22" height="22"/>
<text class="i" x="46" y="45" textLength="132" lengthAdjust="spacingAndGlyphs">FWCYL-313</text>
<use href="#hier" x="809.5" y="26.5" width="27.5" height="22" style="color:#3a7f85"/>
<use href="#heart" x="863" y="26.5" width="24" height="22"/>
<text class="i" x="893.5" y="45" textLength="14" lengthAdjust="spacingAndGlyphs">4</text>
<text class="h" x="0" y="89" textLength="336" lengthAdjust="spacingAndGlyphs">Community leaderboards</text>
<text class="i" x="830" y="89" textLength="77.5" lengthAdjust="spacingAndGlyphs">Bug fix</text>
<rect x="-.5" y="106" width="154" height="41" rx="8" fill="#c8c8c8"/>
<text class="p" x="12.5" y="135" textLength="128" lengthAdjust="spacingAndGlyphs">Not started</text>
<rect x="169.5" y="109" width="82" height="35" rx="6" fill="#fcc98a"/>
<text class="s" x="177.5" y="135" textLength="65" lengthAdjust="spacingAndGlyphs">Profile</text>
<rect x="259.5" y="109" width="77" height="35" rx="6" fill="#0073cf"/>
<text class="s" x="267.5" y="135" textLength="61" lengthAdjust="spacingAndGlyphs">Social</text>
<use href="#clock" x="863.5" y="116" width="24" height="24"/>
<text class="i" x="893.5" y="135" textLength="14" lengthAdjust="spacingAndGlyphs">0</text>
<use href="#k" x="-.5" y="155" width="36" height="36"/>
<text class="i" x="51.5" y="181" textLength="178" lengthAdjust="spacingAndGlyphs">Kathryn Tirador</text>
<rect x="884.5" y="176" width="23" height="4" rx="2" fill="#ddd"/>
</g>
<text x="2199" y="1462.5" textLength="280" lengthAdjust="spacingAndGlyphs" style="font-size:26px;fill:#555">PM-E-3 User experience</text>
<g transform="translate(2213.5 1479)">
<use href="#drag" x="3.5" y="26.5" width="22" height="22"/>
<text class="i" x="46" y="45" textLength="71.5" lengthAdjust="spacingAndGlyphs">PM-19</text>
<use href="#hier" x="809.5" y="26.5" width="27.5" height="22" style="color:#6a35b5"/>
<use href="#heart" x="863" y="26.5" width="24" height="22"/>
<text class="i" x="893.5" y="45" textLength="14" lengthAdjust="spacingAndGlyphs">0</text>
<text class="h" x="0" y="89" textLength="190" lengthAdjust="spacingAndGlyphs">Partner profile</text>
<text class="i" x="858" y="89" textLength="49.5" lengthAdjust="spacingAndGlyphs">New</text>
<rect x="-.5" y="106" width="154" height="41" rx="8" fill="#c8c8c8"/>
<text class="p" x="12.5" y="134" textLength="128" lengthAdjust="spacingAndGlyphs">Not started</text>
<rect x="169.5" y="109" width="143.5" height="35" rx="6" fill="#3b7f82"/>
<text class="s" x="177.5" y="134" textLength="128" lengthAdjust="spacingAndGlyphs">Marketplace</text>
<rect x="321.5" y="109" width="103" height="35" rx="6" fill="#8a4fa0"/>
<text class="s" x="329.5" y="134" textLength="88" lengthAdjust="spacingAndGlyphs">Partners</text>
<use href="#clock" x="852.5" y="115" width="24" height="24"/>
<text class="i" x="882.5" y="134" textLength="25" lengthAdjust="spacingAndGlyphs">1d</text>
<use href="#el" x="-.5" y="155" width="36" height="36"/>
<text class="i" x="51.5" y="181" textLength="144" lengthAdjust="spacingAndGlyphs">Elliot Gordon</text>
<rect x="884.5" y="176" width="23" height="4" rx="2" fill="#ddd"/>
</g>
<text x="2199" y="1746.5" textLength="280" lengthAdjust="spacingAndGlyphs" style="font-size:26px;fill:#555">PM-E-3 User experience</text>
<g transform="translate(2213.5 1762)">
<use href="#drag" x="3.5" y="26.5" width="22" height="22"/>
<text class="i" x="46" y="45" textLength="104.5" lengthAdjust="spacingAndGlyphs">FWCY-77</text>
<use href="#hier" x="809.5" y="26.5" width="27.5" height="22" style="color:#c2456a"/>
<use href="#heart" x="863" y="26.5" width="24" height="22"/>
<text class="i" x="893.5" y="45" textLength="14" lengthAdjust="spacingAndGlyphs">0</text>
</g>
</svg>
</div>
</body>
</html>
